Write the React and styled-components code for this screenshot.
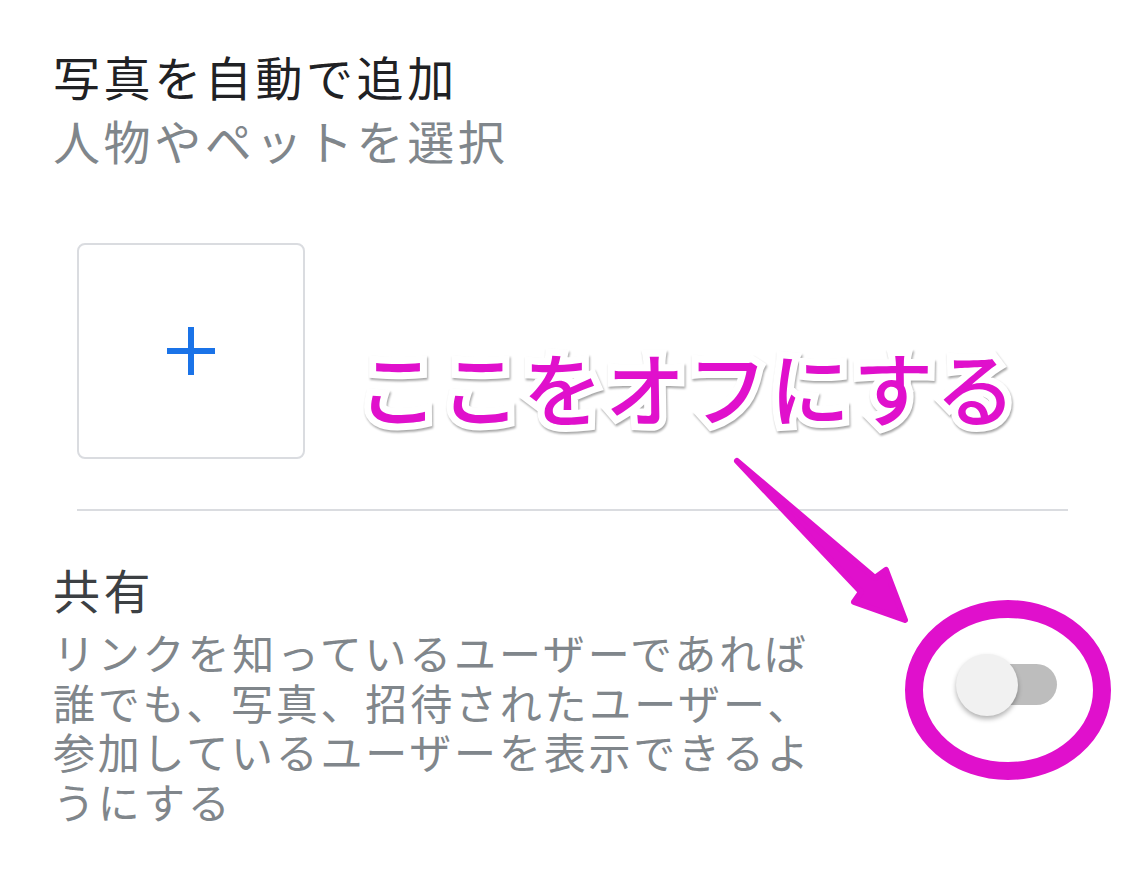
import styled, { createGlobalStyle } from "styled-components";

const GlobalStyle = createGlobalStyle`
  html, body {
    margin: 0;
    padding: 0;
    background: #ffffff;
  }
  body {
    font-family: "Noto Sans CJK JP", "Noto Sans", sans-serif;
  }
`;

const Page = styled.main`
  position: relative;
  width: 1144px;
  height: 875px;
  overflow: hidden;
  background: #fff;
  box-sizing: border-box;
  padding: 44px 76px 0 53px;
`;

const Title = styled.div`
  font-size: 47px;
  letter-spacing: 3.6px;
  line-height: 64px;
  color: ${(p) => p.color || "#202124"};
`;

const Subtitle = styled.div`
  font-size: 47px;
  letter-spacing: 3.6px;
  line-height: 64px;
  color: #80868b;
`;

const AddTile = styled.button`
  display: flex;
  align-items: center;
  justify-content: center;
  width: 228px;
  height: 216px;
  margin: 71px 0 0 24px;
  padding: 0;
  background: #fff;
  border: 2px solid #dadce0;
  border-radius: 8px;
  color: #1a73e8;
`;

const Divider = styled.hr`
  margin: 50px 0 0 24px;
  border: 0;
  height: 2px;
  background: #dadce0;
`;

const ShareRow = styled.section`
  display: flex;
  align-items: flex-start;
  justify-content: space-between;
  margin-top: 46px;
  padding-right: 11px;
`;

const ShareText = styled.div`
  width: 780px;
`;

const Description = styled.p`
  margin: 6px 0 0;
  font-size: 42px;
  letter-spacing: 2.8px;
  line-height: 49.5px;
  color: #80868b;
`;

const Switch = styled.div`
  position: relative;
  width: 101px;
  height: 62px;
  margin-top: 97px;
`;

const Track = styled.span`
  position: absolute;
  left: 20px;
  right: 0;
  top: 10px;
  height: 41px;
  border-radius: 21px;
  background: #bdbdbd;
`;

const Knob = styled.span`
  position: absolute;
  left: 0;
  top: 0;
  width: 62px;
  height: 62px;
  border-radius: 50%;
  background: #f1f1f1;
  box-shadow: 0 3px 5px rgba(0, 0, 0, 0.3);
`;

const Callout = styled.div`
  position: absolute;
  left: 358px;
  top: 330px;
  font-size: 80px;
  font-weight: 500;
  letter-spacing: 2.4px;
  color: #e010cc;
  line-height: 110px;
  -webkit-text-stroke: 14px #fff;
  paint-order: stroke fill;
  filter: drop-shadow(1px 2px 1px rgba(0, 0, 0, 0.35));
`;

const Overlay = styled.svg`
  position: absolute;
  left: 0;
  top: 0;
  pointer-events: none;
`;

const Plus = () => (
  <svg width="56" height="56" viewBox="0 0 56 56">
    <path d="M28 4v48M4 28h48" stroke="currentColor" strokeWidth="6" />
  </svg>
);

export default function App() {
  return (
    <>
      <GlobalStyle />
      <Page>
        <Title>写真を自動で追加</Title>
        <Subtitle>人物やペットを選択</Subtitle>
        <AddTile>
          <Plus />
        </AddTile>
        <Divider />
        <ShareRow>
          <ShareText>
            <Title color="#3c4043">共有</Title>
            <Description>
              リンクを知っているユーザーであれば誰でも、写真、招待されたユーザー、参加しているユーザーを表示できるようにする
            </Description>
          </ShareText>
          <Switch>
            <Track />
            <Knob />
          </Switch>
        </ShareRow>

        <Callout>ここをオフにする</Callout>
        <Overlay width="1144" height="875" viewBox="0 0 1144 875">
          <path
            d="M737 461 L875 578 L886 570 L905 620 L854 602 L861 592 Z"
            fill="#e010cc"
            stroke="#e010cc"
            strokeWidth="6"
            strokeLinejoin="round"
          />
          <ellipse
            cx="1008"
            cy="690"
            rx="94"
            ry="81"
            fill="none"
            stroke="#e010cc"
            strokeWidth="18"
          />
        </Overlay>
      </Page>
    </>
  );
}
